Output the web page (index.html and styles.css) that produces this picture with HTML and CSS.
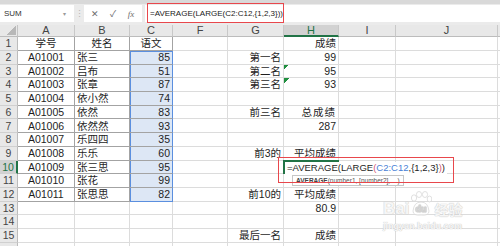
FILE: index.html
```html
<!DOCTYPE html>
<html lang="zh-CN">
<head>
    <meta charset="UTF-8">
    <meta name="viewport" content="width=device-width, initial-scale=1.0">
    <title>AVERAGE + LARGE</title>
    <link rel="stylesheet" href="styles.css">
</head>
<body>
    <div class="top-strip"></div>

    <!-- formula bar -->
    <div class="fbar">
        <div class="namebox"><span>SUM</span><span class="dd">&#9662;</span></div>
        <div class="grip">&#8942;</div>
        <div class="btns">
            <span class="btn">&#10005;</span>
            <span class="btn">&#10003;</span>
            <span class="btn fx">fx</span>
        </div>
        <div class="input">=AVERAGE(LARGE(C2:C12,{1,2,3}))</div>
    </div>

    <!-- sheet -->
    <div class="sheet">
        <div class="corner"></div>
        <div class="ch">A</div><div class="ch">B</div><div class="ch">C</div><div class="ch">F</div>
        <div class="ch">G</div><div class="ch active">H</div><div class="ch">I</div><div class="ch">J</div><div class="ch"></div>

        <div class="rh">1</div>
        <div class="c t m">学号</div><div class="c t m">姓名</div><div class="c t m">语文</div><div class="c"></div>
        <div class="c"></div><div class="c r">成绩</div><div class="c"></div><div class="c"></div><div class="c"></div>

        <div class="rh">2</div>
        <div class="c t m">A01001</div><div class="c t">张三</div><div class="c t r sel first">85</div><div class="c"></div>
        <div class="c r">第一名</div><div class="c r">99</div><div class="c"></div><div class="c"></div><div class="c"></div>

        <div class="rh">3</div>
        <div class="c t m">A01002</div><div class="c t">吕布</div><div class="c t r sel">51</div><div class="c"></div>
        <div class="c r">第二名</div><div class="c r flag">95</div><div class="c"></div><div class="c"></div><div class="c"></div>

        <div class="rh">4</div>
        <div class="c t m">A01003</div><div class="c t">张章</div><div class="c t r sel">87</div><div class="c"></div>
        <div class="c r">第三名</div><div class="c r flag">93</div><div class="c"></div><div class="c"></div><div class="c"></div>

        <div class="rh">5</div>
        <div class="c t m">A01004</div><div class="c t">依小然</div><div class="c t r sel">74</div><div class="c"></div>
        <div class="c"></div><div class="c"></div><div class="c"></div><div class="c"></div><div class="c"></div>

        <div class="rh">6</div>
        <div class="c t m">A01005</div><div class="c t">依然</div><div class="c t r sel">83</div><div class="c"></div>
        <div class="c r">前三名</div><div class="c r wide">总成绩</div><div class="c"></div><div class="c"></div><div class="c"></div>

        <div class="rh">7</div>
        <div class="c t m">A01006</div><div class="c t">依然然</div><div class="c t r sel">93</div><div class="c"></div>
        <div class="c"></div><div class="c r">287</div><div class="c"></div><div class="c"></div><div class="c"></div>

        <div class="rh">8</div>
        <div class="c t m">A01007</div><div class="c t">乐四四</div><div class="c t r sel">35</div><div class="c"></div>
        <div class="c"></div><div class="c"></div><div class="c"></div><div class="c"></div><div class="c"></div>

        <div class="rh">9</div>
        <div class="c t m">A01008</div><div class="c t">乐乐</div><div class="c t r sel">60</div><div class="c"></div>
        <div class="c r">前3的</div><div class="c r">平均成绩</div><div class="c"></div><div class="c"></div><div class="c"></div>

        <div class="rh active">10</div>
        <div class="c t m">A01009</div><div class="c t">张三思</div><div class="c t r sel">95</div><div class="c"></div>
        <div class="c"></div>
        <div class="c act">
            <div class="editor">
                =AVERAGE(LARGE<span class="p">(</span><span class="rng">C2:C12</span>,{1,2,3}<span class="p">)</span>)
                <div class="tip"><b>AVERAGE</b>(number1, [number2], ...)</div>
            </div>
        </div>
        <div class="c"></div><div class="c"></div><div class="c"></div>

        <div class="rh">11</div>
        <div class="c t m">A01010</div><div class="c t">张花</div><div class="c t r sel">99</div><div class="c"></div>
        <div class="c"></div><div class="c"></div><div class="c"></div><div class="c"></div><div class="c"></div>

        <div class="rh">12</div>
        <div class="c t m">A01011</div><div class="c t">张思思</div><div class="c t r sel last">82</div><div class="c"></div>
        <div class="c r">前10的</div><div class="c r">平均成绩</div><div class="c"></div><div class="c"></div><div class="c"></div>

        <div class="rh">13</div>
        <div class="c"></div><div class="c"></div><div class="c"></div><div class="c"></div>
        <div class="c"></div><div class="c r">80.9</div><div class="c"></div><div class="c"></div><div class="c"></div>

        <div class="rh">14</div>
        <div class="c"></div><div class="c"></div><div class="c"></div><div class="c"></div>
        <div class="c"></div><div class="c"></div><div class="c"></div><div class="c"></div><div class="c"></div>

        <div class="rh">15</div>
        <div class="c"></div><div class="c"></div><div class="c"></div><div class="c"></div>
        <div class="c r">最后一名</div><div class="c r">成绩</div><div class="c"></div><div class="c"></div><div class="c"></div>

        <div class="rh">16</div>
        <div class="c"></div><div class="c"></div><div class="c"></div><div class="c"></div>
        <div class="c"></div><div class="c"></div><div class="c"></div><div class="c"></div><div class="c"></div>
    </div>

    <div class="mark mark-bar"></div>
    <div class="mark mark-cell"></div>

    <div class="watermark">
        <div class="wm-logo">
            <span class="wm-bai">Bai</span>
            <svg class="wm-paw" width="22" height="26" viewBox="0 0 22 26">
                <ellipse cx="4" cy="7" rx="2.6" ry="3.2"/>
                <ellipse cx="9" cy="3.5" rx="2.6" ry="3"/>
                <ellipse cx="15" cy="3.5" rx="2.6" ry="3"/>
                <ellipse cx="19.5" cy="8" rx="2.3" ry="3"/>
                <path d="M3 20 Q4 11 11 11 Q18 11 19 20 Q19 25 11 24 Q3 25 3 20 Z"/>
                <text x="11" y="21" text-anchor="middle">du</text>
            </svg>
            <span class="wm-jy">经验</span>
        </div>
        <div class="wm-url">jingyan.baidu.com</div>
    </div>
</body>
</html>
```

FILE: styles.css
```css
body {
    margin: 0;
    width: 500px;
    height: 246px;
    overflow: hidden;
    position: relative;
    background-color: #ffffff;
    font-family: 'Liberation Sans', 'Noto Sans CJK SC', sans-serif;
}

.top-strip {
    height: 4px;
    background-color: #d9d9d9;
}

/* formula bar */
.fbar {
    display: flex;
    height: 17px;
    padding: 1px 0 3px;
    background-color: #ebebeb;
}

.namebox {
    width: 74px;
    box-sizing: border-box;
    padding: 0 8px 0 4px;
    display: flex;
    align-items: center;
    justify-content: space-between;
    background-color: #fff;
    font-size: 8px;
    color: #333;
}

.namebox .dd {
    font-size: 6px;
    color: #999;
}

.grip {
    width: 10px;
    display: flex;
    align-items: center;
    justify-content: center;
    font-size: 9px;
    color: #b5b5b5;
}

.btns {
    width: 58px;
    box-sizing: border-box;
    padding-left: 2px;
    display: flex;
    background-color: #fff;
}

.btn {
    width: 18px;
    display: flex;
    align-items: center;
    justify-content: center;
    font-size: 9px;
    color: #6d6d6d;
}

.btn.fx {
    font-family: 'Liberation Serif', serif;
    font-style: italic;
    font-size: 9px;
}

.input {
    flex: 1;
    margin-left: 3px;
    padding-left: 5px;
    display: flex;
    align-items: center;
    background-color: #fff;
    font-size: 8px;
    color: #222;
}

/* sheet */
.sheet {
    display: grid;
    grid-template-columns: 18px 57px 55px 43px 55px 56px 55px 57px 102px 1fr;
    grid-template-rows: 12px 14px repeat(14, 13.7px) 20px;
    font-size: 10.5px;
    color: #1e1e1e;
}

.sheet > div {
    box-sizing: border-box;
    min-width: 0;
}

.corner {
    background: linear-gradient(135deg, transparent 52%, #b8b8b8 52%) right 1px bottom 1px / 11px 9px no-repeat, #e8e8e8;
    border-right: 1px solid #c4c4c4;
    border-bottom: 1px solid #bcbcbc;
}

.ch,
.rh {
    display: flex;
    align-items: center;
    justify-content: center;
    background-color: #e8e8e8;
    color: #444;
    line-height: 1;
}

.ch {
    font-size: 11px;
    border-right: 1px solid #c8c8c8;
    border-bottom: 1px solid #bcbcbc;
}

.rh {
    font-size: 10.5px;
    border-right: 1px solid #bcbcbc;
    border-bottom: 1px solid #d0d0d0;
}

.ch.active {
    background-color: #d2d2d2;
    color: #217346;
    border-bottom: 2px solid #217346;
}

.rh.active {
    background-color: #d2d2d2;
    color: #217346;
    border-right: 2px solid #217346;
}

.c {
    display: flex;
    align-items: center;
    padding: 0 2px;
    white-space: nowrap;
    overflow: hidden;
    line-height: 1;
    border-right: 1px solid #dcdcdc;
    border-bottom: 1px solid #dcdcdc;
}

.c.t {
    border-right-color: #a3a3a3;
    border-bottom-color: #a3a3a3;
}

.c.m {
    justify-content: center;
}

.c.r {
    justify-content: flex-end;
}

.c.wide {
    letter-spacing: 1px;
}

/* range reference C2:C12 */
.c.sel {
    background-color: #dde7f5;
    border-right-color: #5b8fdf;
    box-shadow: inset 1px 0 #5b8fdf;
}

.c.sel.first {
    box-shadow: inset 1px 0 #5b8fdf, inset 0 1px #5b8fdf;
}

.c.sel.last {
    border-bottom-color: #5b8fdf;
}

.c.flag {
    background: linear-gradient(135deg, #1f8f3f 50%, transparent 50%) 0 0 / 5px 5px no-repeat;
}

/* active cell H10 in edit mode */
.c.act {
    position: relative;
    z-index: 1;
    margin: -1px 0 0 -1px;
    padding: 0;
    border: 2px solid #217346;
    align-items: flex-start;
    overflow: visible;
}

.editor {
    position: relative;
    z-index: 2;
    flex: none;
    height: 13px;
    padding: 0 2px;
    display: flex;
    align-items: center;
    background-color: #fff;
    font-size: 9.5px;
    color: #1e1e1e;
    white-space: nowrap;
}

.editor .p {
    color: #d65a78;
}

.editor .rng {
    color: #4a7fd6;
}

.tip {
    position: absolute;
    top: 100%;
    left: 7px;
    width: max-content;
    height: 9px;
    padding: 0 3px;
    border: 1px solid #c6c6c6;
    background-color: #fff;
    font-size: 6.5px;
    line-height: 9px;
    color: #555;
}

.tip b {
    color: #444;
}

/* red annotation boxes */
.mark {
    position: absolute;
    box-sizing: border-box;
    border: 1.5px solid #e8474c;
    z-index: 5;
}

.mark-bar {
    left: 147px;
    top: 3px;
    width: 137px;
    height: 20px;
}

.mark-cell {
    left: 278px;
    top: 157px;
    width: 176px;
    height: 26px;
}

/* watermark */
.watermark {
    position: absolute;
    left: 383px;
    top: 189px;
    z-index: 4;
    color: rgba(255, 255, 255, 0.85);
    text-shadow: 0 0 1px #c8c8c8, 0 0 1px #c8c8c8;
}

.wm-logo {
    display: flex;
    align-items: flex-end;
    height: 28px;
}

.wm-bai {
    font-size: 17px;
    font-weight: bold;
    line-height: 1;
}

.wm-paw {
    margin: 0 2px 0 1px;
}

.wm-paw ellipse,
.wm-paw path {
    fill: rgba(255, 255, 255, 0.6);
    stroke: #d8d8d8;
    stroke-width: 0.8;
}

.wm-paw text {
    font-family: 'Liberation Sans', sans-serif;
    font-size: 9px;
    font-weight: bold;
    fill: #fff;
    stroke: #d2d2d2;
    stroke-width: 0.5;
}

.wm-jy {
    font-size: 14px;
    line-height: 1;
    font-weight: bold;
}

.wm-url {
    margin-top: 4px;
    font-size: 9px;
    font-weight: bold;
}
```
